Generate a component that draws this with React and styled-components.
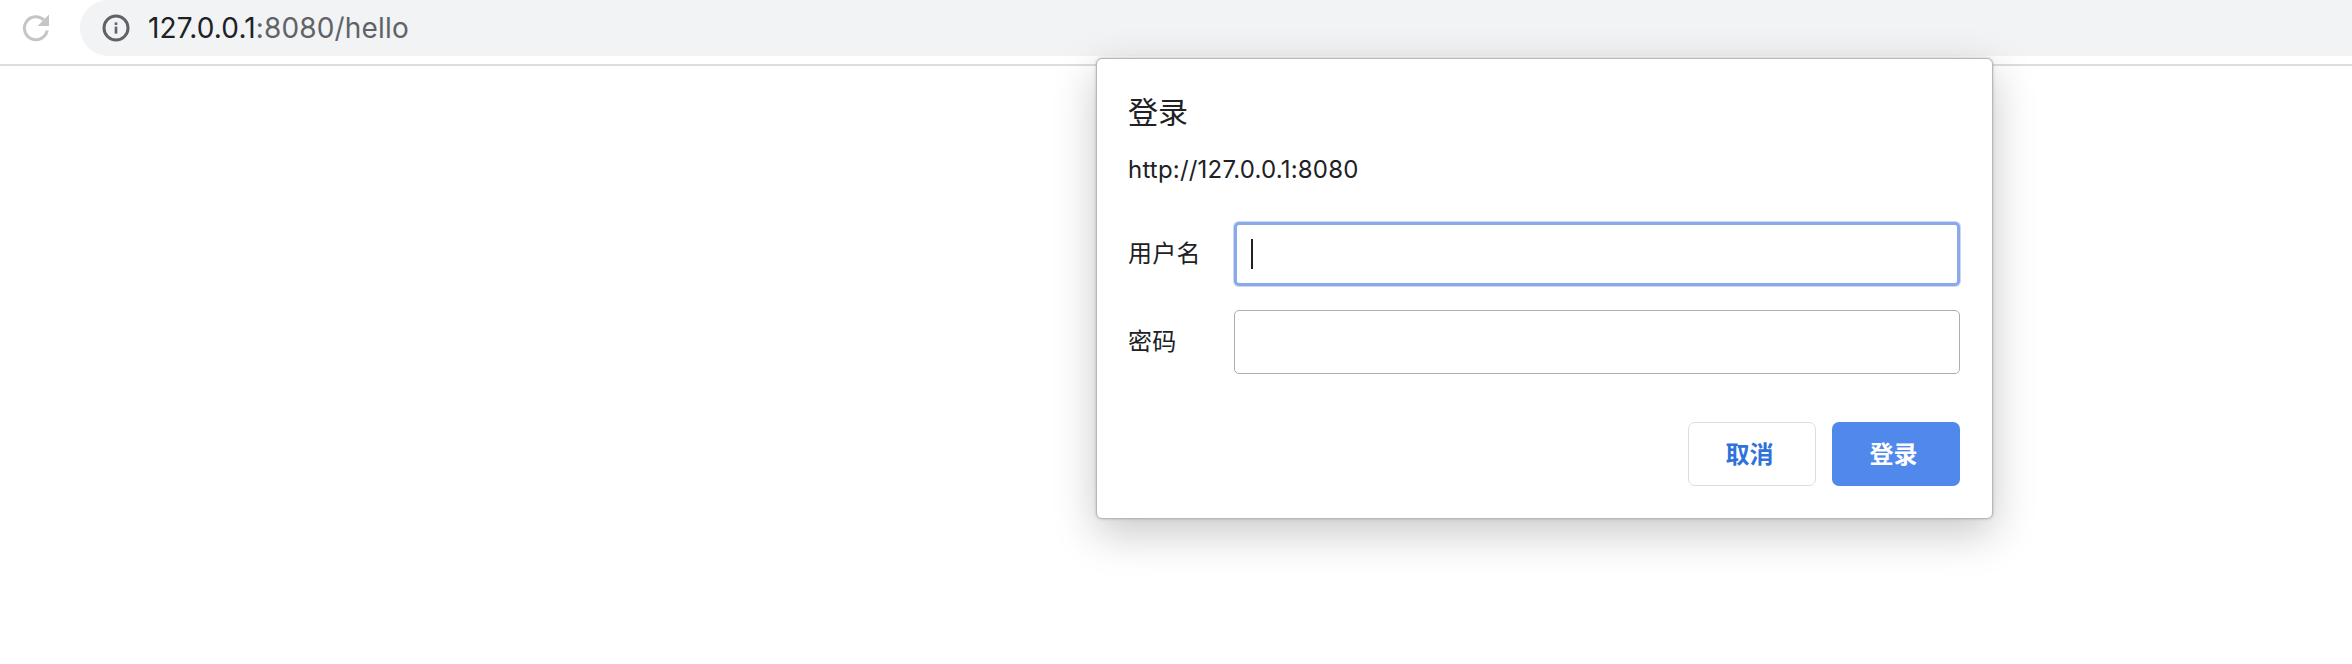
import React from 'react';
import styled, { createGlobalStyle } from 'styled-components';

const Global = createGlobalStyle`
  html, body { margin: 0; padding: 0; background: #fff; }
  body { font-family: Inter, "Noto Sans CJK SC", sans-serif; overflow: hidden; }
  #root { height: 664px; width: 2352px; position: relative; }
`;

const Toolbar = styled.header`
  display: flex;
  align-items: flex-start;
  height: 64px;
  border-bottom: 2px solid #dcdce2;
  box-sizing: content-box;
`;
const ReloadButton = styled.div`
  width: 80px;
  height: 56px;
  display: flex;
  align-items: center;
  justify-content: flex-start;
  padding-left: 21px;
  box-sizing: border-box;
`;
const Omnibox = styled.div`
  flex: 1;
  height: 56px;
  background: #f1f3f4;
  border-radius: 28px 0 0 28px;
  display: flex;
  align-items: center;
  padding-left: 22px;
  gap: 18px;
`;
const Url = styled.div`
  font-size: 28px;
  letter-spacing: 0.15px;
  color: #5f6368;
  line-height: 56px;
`;
const Host = styled.span`
  color: #202124;
`;
const Dialog = styled.div`
  position: absolute;
  left: 1096px;
  top: 58px;
  width: 897px;
  height: 461px;
  box-sizing: border-box;
  background: #fff;
  border: 1px solid #b8b8b8;
  border-radius: 6px;
  box-shadow: 0 0 3px rgba(0,0,0,0.22), 0 14px 44px rgba(0,0,0,0.22);
  padding: 31px 32px 32px 31px;
  display: flex;
  flex-direction: column;
  color: #202124;
`;
const Title = styled.h1`
  margin: 0;
  font-size: 30px;
  font-weight: 400;
  line-height: 44px;
`;
const Origin = styled.div`
  margin-top: 18px;
  font-size: 24px;
  letter-spacing: 0.2px;
  line-height: 36px;
`;
const Form = styled.div`
  margin-top: 34px;
  display: grid;
  grid-template-columns: 106px 726px;
  row-gap: 24px;
  align-items: center;
`;
const Label = styled.label`
  font-size: 24px;
  letter-spacing: 0.3px;
  line-height: 32px;
`;
const Field = styled.div`
  height: 64px;
  box-sizing: border-box;
  border-radius: 5px;
  background: #fff;
  display: flex;
  align-items: center;
  padding-left: 14px;
  border: ${p => (p.$focused ? '3px solid #8aa9e6' : '1px solid #adadad')};
  box-shadow: ${p => (p.$focused ? '0 0 0 1px rgba(138,169,230,0.45)' : 'none')};
`;
const Caret = styled.div`
  width: 2px;
  height: 30px;
  background: #202124;
`;
const Actions = styled.div`
  margin-top: auto;
  display: flex;
  justify-content: flex-end;
  gap: 16px;
`;
const Button = styled.button`
  width: 128px;
  height: 64px;
  box-sizing: border-box;
  border-radius: 7px;
  font-family: inherit;
  font-size: 24px;
  font-weight: 700;
  padding: 0 5px 3px 0;
  color: ${p => (p.$primary ? '#fff' : '#2f72d9')};
  background: ${p => (p.$primary ? '#5188ec' : '#fff')};
  border: ${p => (p.$primary ? 'none' : '1px solid #dedede')};
`;

const ReloadIcon = () => (
  <svg width="30" height="30" viewBox="0 0 30 30" fill="none">
    <path d="M26.2 17.5A11.5 11.5 0 1 1 22.8 6.8" stroke="#c4c5c7" strokeWidth="3" strokeLinecap="butt" />
    <path d="M28 1.5V13H16.6Z" fill="#c4c5c7" />
  </svg>
);

const InfoIcon = () => (
  <svg width="28" height="28" viewBox="0 0 28 28" fill="none">
    <circle cx="14" cy="14" r="12" stroke="#5f6368" strokeWidth="3" />
    <rect x="12.7" y="12.6" width="2.6" height="7" fill="#5f6368" />
    <rect x="12.7" y="8.4" width="2.6" height="2.6" fill="#5f6368" />
  </svg>
);

export default function App() {
  return (
    <>
      <Global />
      <Toolbar>
        <ReloadButton><ReloadIcon /></ReloadButton>
        <Omnibox>
          <InfoIcon />
          <Url><Host>127.0.0.1</Host>:8080/hello</Url>
        </Omnibox>
      </Toolbar>
      <Dialog>
        <Title>登录</Title>
        <Origin>http://127.0.0.1:8080</Origin>
        <Form>
          <Label>用户名</Label>
          <Field $focused><Caret /></Field>
          <Label>密码</Label>
          <Field />
        </Form>
        <Actions>
          <Button>取消</Button>
          <Button $primary>登录</Button>
        </Actions>
      </Dialog>
    </>
  );
}
